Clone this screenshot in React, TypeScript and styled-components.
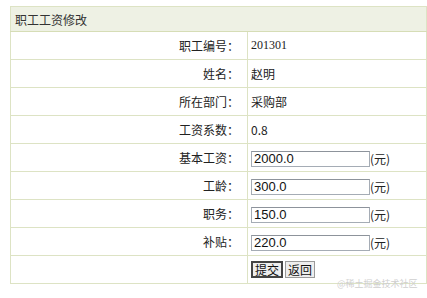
import React from 'react';
import styled, { createGlobalStyle } from 'styled-components';

const GlobalStyle = createGlobalStyle`
    html, body {
        margin: 0;
        padding: 0;
        background: #ffffff;
    }
    body {
        font-family: "Noto Sans CJK SC", "Liberation Sans", sans-serif;
        font-size: 12px;
        color: #222;
    }
`;

type Field = {
    label: string;
    value: string;
    kind: 'text' | 'serif' | 'input';
};

const fields: Array<Field> = [
    { label: '职工编号：', value: '201301', kind: 'serif' },
    { label: '姓名：', value: '赵明', kind: 'text' },
    { label: '所在部门：', value: '采购部', kind: 'text' },
    { label: '工资系数：', value: '0.8', kind: 'text' },
    { label: '基本工资：', value: '2000.0', kind: 'input' },
    { label: '工龄：', value: '300.0', kind: 'input' },
    { label: '职务：', value: '150.0', kind: 'input' },
    { label: '补贴：', value: '220.0', kind: 'input' }
];

const App = (): JSX.Element => {
    return (
        <Page>
            <GlobalStyle />
            <Table>
                <colgroup>
                    <Col width={237} />
                    <Col width={179} />
                </colgroup>
                <tbody>
                    <tr>
                        <HeaderCell colSpan={2}>职工工资修改</HeaderCell>
                    </tr>
                    {fields.map((f: Field, i): JSX.Element => (
                        <tr key={i}>
                            <LabelCell>{f.label}</LabelCell>
                            <ValueCell serif={f.kind === 'serif'}>
                                {f.kind === 'input'
                                    ? <><Input defaultValue={f.value} /><Unit>(元)</Unit></>
                                    : f.value}
                            </ValueCell>
                        </tr>
                    ))}
                    <tr>
                        <LabelCell></LabelCell>
                        <ValueCell>
                            <Buttons>
                                <Button primary type="button">提交</Button>
                                <Button type="button">返回</Button>
                            </Buttons>
                        </ValueCell>
                    </tr>
                </tbody>
            </Table>
            <Watermark>@稀土掘金技术社区</Watermark>
        </Page>
    );
};

export default App;

const Page = styled.div`
    position: relative;
    width: 427px;
    height: 298px;
    padding: 6px 0 0 10px;
    box-sizing: border-box;
    overflow: hidden;
`;

const Table = styled.table`
    width: 416px;
    border-collapse: collapse;
    border: 1px solid #dde3c4;
    table-layout: fixed;
`;

const Col = styled.col<{ width: number }>`
    width: ${(p) => p.width}px;
`;

const HeaderCell = styled.td`
    height: 24px;
    padding: 0 0 0 4px;
    background: #eef1e4;
    border: 1px solid #dde3c4;
    border-bottom-color: #d6ddb6;
    font-size: 12px;
    color: #333;
    text-align: left;
`;

const LabelCell = styled.td`
    height: 27px;
    padding: 0 8px 0 0;
    border: 1px solid #dde3c4;
    text-align: right;
    font-size: 12px;
    color: #222;
`;

const ValueCell = styled.td<{ serif?: boolean }>`
    height: 27px;
    padding: 0 0 0 3px;
    border: 1px solid #dde3c4;
    font-family: ${(p) => p.serif ? '"Liberation Serif", serif' : '"Noto Sans CJK SC", "Liberation Sans", sans-serif'};
    font-size: 12px;
    color: #222;
    white-space: nowrap;
`;

const Input = styled.input`
    width: 119px;
    height: 16px;
    box-sizing: border-box;
    margin: 0;
    padding: 0 2px;
    border: 1px solid #a5acb5;
    border-top-color: #8d939b;
    font-family: "Liberation Sans", Arial, sans-serif;
    font-size: 13px;
    color: #111;
    vertical-align: middle;
    outline: none;
`;

const Unit = styled.span`
    font-size: 12px;
    vertical-align: middle;
`;

const Buttons = styled.div`
    display: flex;
    gap: 2px;
    align-items: center;
`;

const Button = styled.button<{ primary?: boolean }>`
    height: 17px;
    margin: 0;
    padding: 0 2px;
    background: #eeeeee;
    border: ${(p) => p.primary ? '2px solid #444' : '1px solid #9a9a9a'};
    font-family: "Noto Sans CJK SC", sans-serif;
    font-size: 12px;
    line-height: 13px;
    color: #111;
`;

const Watermark = styled.div`
    position: absolute;
    left: 337px;
    top: 277px;
    font-size: 9px;
    color: #cfcfcf;
    white-space: nowrap;
`;
